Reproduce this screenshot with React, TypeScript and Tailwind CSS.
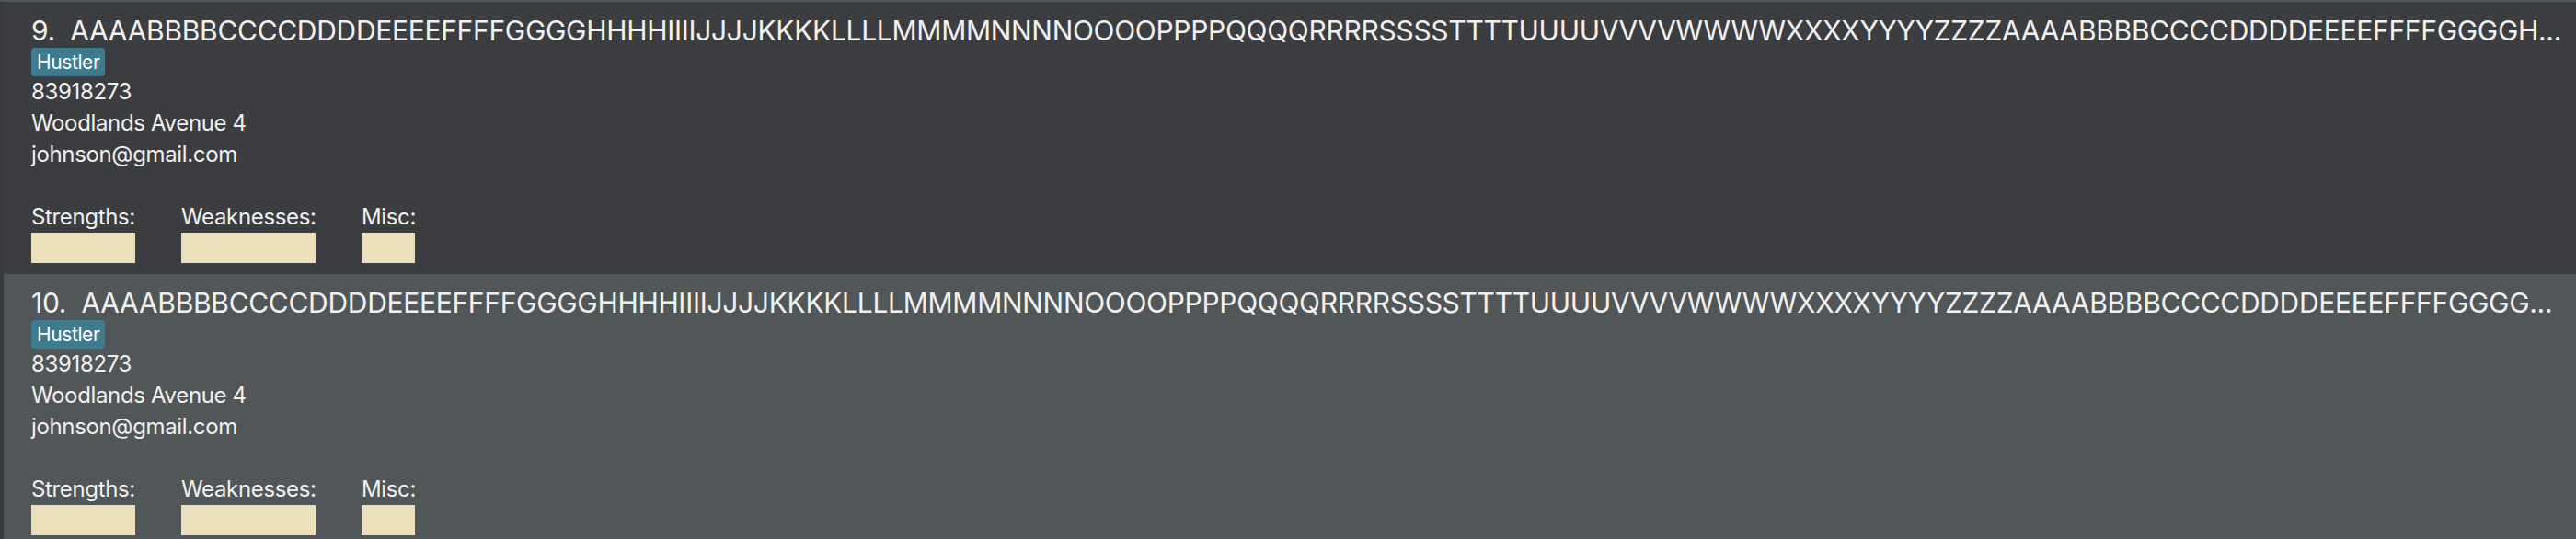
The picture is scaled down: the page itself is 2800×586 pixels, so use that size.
import React from 'react';

interface Person {
  index: number;
  name: string;
  tag: string;
  phone: string;
  address: string;
  email: string;
}

const people: Person[] = [
  {
    index: 9,
    name: 'AAAABBBBCCCCDDDDEEEEFFFFGGGGHHHHIIIIJJJJKKKKLLLLMMMMNNNNOOOOPPPPQQQQRRRRSSSSTTTTUUUUVVVVWWWWXXXXYYYYZZZZAAAABBBBCCCCDDDDEEEEFFFFGGGGH...',
    tag: 'Hustler',
    phone: '83918273',
    address: 'Woodlands Avenue 4',
    email: 'johnson@gmail.com',
  },
  {
    index: 10,
    name: 'AAAABBBBCCCCDDDDEEEEFFFFGGGGHHHHIIIIJJJJKKKKLLLLMMMMNNNNOOOOPPPPQQQQRRRRSSSSTTTTUUUUVVVVWWWWXXXXYYYYZZZZAAAABBBBCCCCDDDDEEEEFFFFGGGG...',
    tag: 'Hustler',
    phone: '83918273',
    address: 'Woodlands Avenue 4',
    email: 'johnson@gmail.com',
  },
];

const PersonCard: React.FC<{ person: Person; odd: boolean }> = ({ person, odd }) => {
  return (
    <div className={`h-[296px] pl-[30px] pt-[13px] flex flex-col ${odd ? 'bg-[#3c3d40]' : 'bg-[#515658]'}`}>
      <div className="h-[36px] leading-[36px] text-[30px] tracking-[-0.3px] text-[#f0f0f0] whitespace-pre overflow-hidden">
        {person.index}.  {person.name}
      </div>

      <div className="flex mt-[1px]">
        <span className="h-[31px] px-[6px] rounded-[4px] bg-[#3e7b8f] text-white text-[21px] tracking-[-0.4px] leading-[31px]">
          {person.tag}
        </span>
      </div>

      <div className="text-[24px] leading-[34px] tracking-[-0.35px] text-[#f0f0f0]">
        <div>{person.phone}</div>
        <div>{person.address}</div>
        <div>{person.email}</div>
      </div>

      {/* Strengths / weaknesses / misc */}
      <div className="flex gap-[50px] mt-[34px] text-[24px] leading-[34px] tracking-[-0.35px] text-[#f0f0f0]">
        <div className="flex flex-col w-[113px]">
          <span>Strengths:</span>
          <div className="h-[33px] bg-[#ebdfbc]"></div>
        </div>
        <div className="flex flex-col w-[146px]">
          <span>Weaknesses:</span>
          <div className="h-[33px] bg-[#ebdfbc]"></div>
        </div>
        <div className="flex flex-col w-[58px]">
          <span>Misc:</span>
          <div className="h-[33px] bg-[#ebdfbc]"></div>
        </div>
      </div>
    </div>
  );
};

export default function App() {
  return (
    <div className="w-[2800px] h-[586px] overflow-hidden bg-[#37393b]" style={{ fontFamily: 'Inter, "Open Sans", sans-serif' }}>
      <div className="h-[2px] bg-[#4f5558]"></div>
      <div className="pl-[4px]">
        {people.map((p, i) => (
          <PersonCard key={p.index} person={p} odd={i % 2 === 0} />
        ))}
      </div>
    </div>
  );
}
